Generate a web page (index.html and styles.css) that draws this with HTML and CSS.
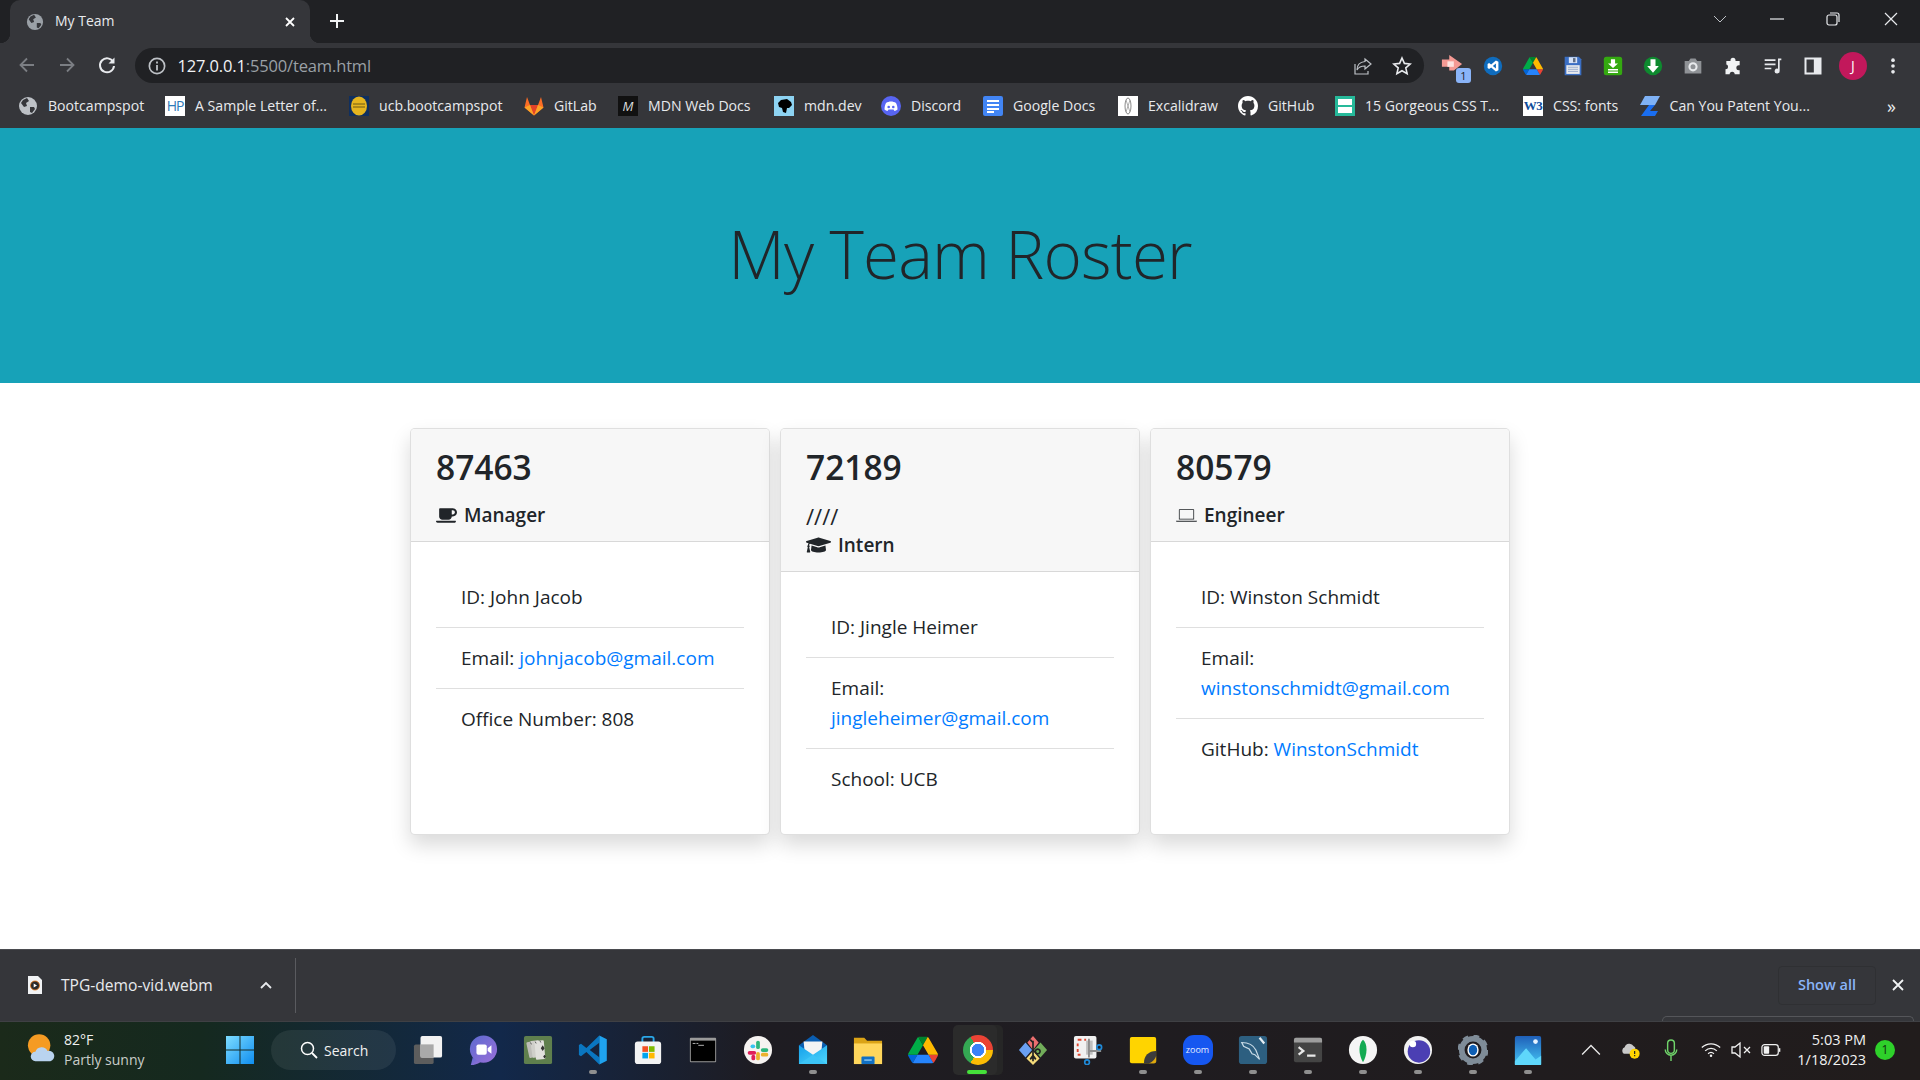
FILE: index.html
```html
<!DOCTYPE html>
<html lang="en">
<head>
<meta charset="utf-8">
<title>My Team</title>
<link rel="stylesheet" href="styles.css">
</head>
<body>
<svg class="defs" width="0" height="0" aria-hidden="true">
  <defs>
    <symbol id="drive" viewBox="0 0 87.3 78">
      <path d="m6.6 66.85 3.85 6.65c.8 1.4 1.95 2.5 3.3 3.3l13.75-23.8h-27.5c0 1.55.4 3.1 1.2 4.5z" fill="#0066da"/>
      <path d="m43.65 25-13.75-23.8c-1.35.8-2.5 1.9-3.3 3.3l-25.4 44a9.06 9.06 0 0 0 -1.2 4.5h27.5z" fill="#00ac47"/>
      <path d="m73.55 76.8c1.35-.8 2.5-1.9 3.3-3.3l1.6-2.75 7.65-13.25c.8-1.4 1.2-2.95 1.2-4.5h-27.502l5.852 11.5z" fill="#ea4335"/>
      <path d="m43.65 25 13.75-23.8c-1.35-.8-2.9-1.2-4.5-1.2h-18.5c-1.6 0-3.15.45-4.5 1.2z" fill="#00832d"/>
      <path d="m59.8 53h-32.3l-13.75 23.8c1.35.8 2.9 1.2 4.5 1.2h50.8c1.6 0 3.15-.45 4.5-1.2z" fill="#2684fc"/>
      <path d="m73.4 26.5-12.7-22c-.8-1.4-1.95-2.5-3.3-3.3l-13.75 23.8 16.15 28h27.45c0-1.55-.4-3.1-1.2-4.5z" fill="#ffba00"/>
    </symbol>
    <linearGradient id="wl" x1="0" y1="0" x2="1" y2="1"><stop offset="0" stop-color="#7ddcff"/><stop offset="1" stop-color="#0f8ef0"/></linearGradient>
    <linearGradient id="ph" x1="0" y1="0" x2="0" y2="1"><stop offset="0" stop-color="#1f5fb8"/><stop offset="1" stop-color="#45c5f5"/></linearGradient>
    <linearGradient id="tm" x1="0" y1="0" x2="1" y2="1"><stop offset="0" stop-color="#5b6ad0"/><stop offset="1" stop-color="#9a6fd8"/></linearGradient>
    <linearGradient id="ml" x1="0" y1="0" x2="1" y2="1"><stop offset="0" stop-color="#15a0ea"/><stop offset="1" stop-color="#4fd6fb"/></linearGradient>
  </defs>
</svg>
<div class="tabstrip">
  <div class="tab">
    <svg class="favicon" viewBox="0 0 20 20"><circle cx="10" cy="10" r="9" fill="#9aa0a6"/><path d="M5 4l4-2 2 3-3 2 1 3-3 1-3-4zM12 11l4 0 1 2-3 4-2-1z" fill="#35363a"/></svg>
    <span class="tab-title">My Team</span>
    <svg class="tab-x" viewBox="0 0 12 12"><path d="M2 2l8 8M10 2l-8 8" stroke="#fff" stroke-width="1.8"/></svg>
  </div>
  <svg class="newtab" viewBox="0 0 16 16"><path d="M8 1v14M1 8h14" stroke="#f1f3f4" stroke-width="2"/></svg>
  <div class="winctl">
    <svg viewBox="0 0 14 8" class="w-chev"><path d="M1 1l6 6 6-6" fill="none" stroke="#bdc1c6"/></svg>
    <svg viewBox="0 0 14 14" class="w-btn w-min"><path d="M0 7h14" stroke="#e8eaed" stroke-width="1.2"/></svg>
    <svg viewBox="0 0 14 14" class="w-btn w-res"><rect x="1" y="3" width="10" height="10" rx="2" fill="none" stroke="#e8eaed" stroke-width="1.2"/><path d="M4 1h7a2 2 0 0 1 2 2v7" fill="none" stroke="#e8eaed" stroke-width="1.2"/></svg>
    <svg viewBox="0 0 14 14" class="w-btn w-cls"><path d="M1 1l12 12M13 1L1 13" stroke="#e8eaed" stroke-width="1.2"/></svg>
  </div>
</div>

<div class="toolbar">
  <div class="navs">
    <svg class="tb" viewBox="0 0 20 20"><path d="M17 10H4M10 3.5L3.5 10l6.5 6.5" fill="none" stroke="#7b7e83" stroke-width="1.8"/></svg>
    <svg class="tb" viewBox="0 0 20 20"><path d="M3 10h13M10 3.5l6.5 6.5-6.5 6.500" fill="none" stroke="#7b7e83" stroke-width="1.8"/></svg>
    <svg class="tb" viewBox="0 0 20 20"><path d="M16.2 7A7 7 0 1 0 17 11" fill="none" stroke="#e8eaed" stroke-width="2"/><path d="M17.5 2.5v6h-6z" fill="#e8eaed"/></svg>
  </div>
  <div class="omnibox">
    <svg class="info" viewBox="0 0 16 16"><circle cx="8" cy="8" r="6.8" fill="none" stroke="#bdc1c6" stroke-width="1.5"/><path d="M8 7v5M8 4v1.8" stroke="#bdc1c6" stroke-width="1.6"/></svg>
    <span class="url"><b>127.0.0.1</b>:5500/team.html</span>
    <svg class="omni-ico share" viewBox="0 0 20 20"><path d="M12 3l6 5-6 5v-3c-4 0-6.500 1-8 4 0-5 3-8 8-8.500z" fill="none" stroke="#bdc1c6" stroke-width="1.2"/><path d="M2 8v10h13v-3" fill="none" stroke="#bdc1c6" stroke-width="1.2"/></svg>
    <svg class="omni-ico" viewBox="0 0 20 20"><path d="M10 2l2.400 5.400 5.800.6-4.400 3.900 1.300 5.800L10 14.700l-5.100 3 1.300-5.800L1.800 8l5.800-.6z" fill="none" stroke="#e8eaed" stroke-width="1.6"/></svg>
  </div>
  <div class="exts">
    <div class="ext"><svg class="ext-arrow" viewBox="0 0 24 24"><path d="M1 6h8V1l14 10-9 7-5 0v-4H1z" fill="#f59a94"/><rect x="7" y="8" width="7" height="6" fill="#fde3e0"/></svg><span class="ext-badge">1</span></div>
    <div class="ext"><svg viewBox="0 0 24 24"><circle cx="12" cy="12" r="11" fill="#0f6cbd"/><path d="M15.500 5.500L9.800 10.300 7.300 8.500 5.500 9.500v5l1.800 1 2.500-1.800 5.700 4.800 3-1.300V6.800zM15.500 9v6l-3.700-3z" fill="#fff" fill-rule="evenodd"/></svg></div>
    <div class="ext"><svg viewBox="0 0 87.3 78"><use href="#drive"/></svg></div>
    <div class="ext"><svg viewBox="0 0 24 24"><path d="M2 1h17l3 3v19H2z" fill="#3b6fc4"/><rect x="7" y="1.500" width="10" height="7" fill="#d7e3f7"/><rect x="12" y="2.500" width="3" height="5" fill="#5f6d85"/><rect x="4" y="11" width="16" height="10.500" fill="#e8eaed"/><path d="M6 13.500h12M6 16h12M6 18.500h12" stroke="#8ea4c9"/></svg></div>
    <div class="ext"><svg viewBox="0 0 24 24"><rect x="1" y="1" width="22" height="22" rx="3" fill="#34a910"/><path d="M9.500 4h5v5h3.500L12 14.500 6 9h3.500z" fill="#fff"/><path d="M6 16.500h12M6 19.500h12" fill="none" stroke="#fff" stroke-width="1.800"/></svg></div>
    <div class="ext"><svg viewBox="0 0 24 24"><circle cx="12" cy="12" r="11" fill="#0e8a2f"/><path d="M9 4h6v8h4l-7 8-7-8h4z" fill="#fff"/></svg></div>
    <div class="ext"><svg viewBox="0 0 24 24"><path d="M2 6h5l2-3h6l2 3h5v15H2z" fill="#8f9296"/><circle cx="12" cy="13" r="5.500" fill="#e8eaed"/><circle cx="12" cy="13" r="3" fill="#8f9296"/></svg></div>
    <div class="ext"><svg viewBox="0 0 24 24"><path d="M4 6h5V5a3 3 0 0 1 6 0v1h5v5h-1a3 3 0 0 0 0 6h1v5h-6a3 3 0 0 0-6 0H3v-6a3 3 0 0 0 0-6h1z" fill="#f1f3f4"/></svg></div>
    <div class="ext"><svg viewBox="0 0 24 24"><path d="M2 5h13M2 10h13M2 15h8" stroke="#e8eaed" stroke-width="2"/><path d="M18 3h4v2h-2v13a3 3 0 1 1-2-2.800z" fill="#e8eaed"/></svg></div>
    <div class="ext"><svg viewBox="0 0 24 24"><rect x="3" y="3" width="18" height="18" fill="none" stroke="#e8eaed" stroke-width="2.400"/><rect x="13" y="3" width="8" height="18" fill="#e8eaed"/></svg></div>
    <div class="ext"><span class="avatar">J</span></div>
    <div class="ext"><svg viewBox="0 0 24 24"><circle cx="12" cy="5" r="2.200" fill="#e8eaed"/><circle cx="12" cy="12" r="2.200" fill="#e8eaed"/><circle cx="12" cy="19" r="2.200" fill="#e8eaed"/></svg></div>
  </div>
</div>

<div class="bookmarks">
  <a class="bm"><svg class="bi" viewBox="0 0 20 20"><circle cx="10" cy="10" r="9" fill="#bdc1c6"/><path d="M5 4l4-2 2 3-3 2 1 3-3 1-3-4zM12 11l4 0 1 2-3 4-2-1z" fill="#35363a"/></svg>Bootcampspot</a>
  <a class="bm"><span class="bi bi-hp">HP</span>A Sample Letter of...</a>
  <a class="bm"><svg class="bi" viewBox="0 0 20 20"><rect width="20" height="20" fill="#0f2f5f"/><ellipse cx="10" cy="10" rx="8" ry="9.500" fill="#e5b51f"/><path d="M4 8h12M4 11h12" stroke="#6d5a14"/></svg>ucb.bootcampspot</a>
  <a class="bm"><svg class="bi" viewBox="0 0 20 20"><path d="M10 19.500L.500 11.500 3 1l3 8h8l3-8 2.500 10.500z" fill="#fc6d26"/><path d="M10 19.500L6 9h8z" fill="#e24329"/><path d="M.500 11.500L6 9l4 10.500zM19.500 11.500L14 9l-4 10.500z" fill="#fca326"/></svg>GitLab</a>
  <a class="bm"><span class="bi bi-mdn">M</span>MDN Web Docs</a>
  <a class="bm"><svg class="bi" viewBox="0 0 20 20"><rect width="20" height="20" fill="#8dd3f2"/><path d="M4 7l3-3 6-1 4 3 1 3-3 3-2 0-1 5-3-1-1-4-3-1z" fill="#000"/></svg>mdn.dev</a>
  <a class="bm"><svg class="bi" viewBox="0 0 20 20"><circle cx="10" cy="10" r="10" fill="#5865f2"/><path d="M5 7c3-2 7-2 10 0 1 2 1.500 4 1.500 6.500-1 .8-2 1.200-3 1.500l-1-1.500h-5L6.500 15c-1-.3-2-.7-3-1.500C3.500 11 4 9 5 7z" fill="#fff"/><circle cx="7.700" cy="11" r="1.300" fill="#5865f2"/><circle cx="12.300" cy="11" r="1.300" fill="#5865f2"/></svg>Discord</a>
  <a class="bm"><svg class="bi" viewBox="0 0 20 20"><rect width="20" height="20" rx="2" fill="#4285f4"/><path d="M4 5h12M4 9h12M4 13h12M4 16h7" stroke="#fff" stroke-width="1.800"/></svg>Google Docs</a>
  <a class="bm"><svg class="bi" viewBox="0 0 20 20"><rect width="20" height="20" fill="#fff"/><ellipse cx="10" cy="10" rx="3" ry="8" fill="none" stroke="#8a8a8a"/><path d="M8 4l4 12M12 4L8 16" stroke="#9a9a9a" stroke-width=".8"/></svg>Excalidraw</a>
  <a class="bm"><svg class="bi" viewBox="0 0 16 16"><path fill="#fff" d="M8 0C3.580 0 0 3.580 0 8c0 3.540 2.290 6.530 5.470 7.590.4.070.55-.170.55-.380 0-.190-.010-.820-.010-1.490-2.010.370-2.530-.490-2.690-.940-.090-.230-.480-.940-.820-1.130-.280-.150-.680-.520-.010-.530.630-.010 1.080.580 1.230.820.720 1.210 1.870.870 2.330.660.070-.520.280-.870.510-1.070-1.780-.200-3.640-.890-3.640-3.950 0-.870.310-1.590.820-2.150-.080-.200-.360-1.020.080-2.120 0 0 .670-.210 2.200.820.640-.180 1.320-.270 2-.270s1.360.090 2 .270c1.530-1.040 2.200-.820 2.200-.820.440 1.100.160 1.920.080 2.120.510.560.820 1.270.820 2.150 0 3.070-1.870 3.750-3.650 3.950.290.250.540.730.540 1.480 0 1.070-.010 1.930-.010 2.200 0 .210.150.460.550.380A8.010 8.010 0 0 0 16 8c0-4.420-3.580-8-8-8z"/></svg>GitHub</a>
  <a class="bm"><svg class="bi" viewBox="0 0 20 20"><rect width="20" height="20" fill="#26b99a"/><rect x="3" y="3" width="14" height="6" fill="#fff"/><rect x="3" y="11" width="14" height="6" fill="#fff"/></svg>15 Gorgeous CSS T...</a>
  <a class="bm"><span class="bi bi-w3">W3</span>CSS: fonts</a>
  <a class="bm"><svg class="bi" viewBox="0 0 20 20"><path d="M5 0h15l-5 9H0z" fill="#7fb2f5"/><path d="M9 9h6l-5 6h8l-3 5H1z" fill="#1a6ef0"/></svg>Can You Patent You...</a>
  <span class="bm-more">»</span>
</div>

<main class="page">
  <header class="hero"><h1 class="hero-title">My Team Roster</h1></header>
  <section class="roster">
    <article class="card">
      <div class="card-head">
        <h3 class="emp-name">87463</h3>
        <h5 class="emp-role"><svg class="role-ico" viewBox="0 0 640 512"><path d="M192 384h192c53 0 96-43 96-96h32c70.600 0 128-57.400 128-128S582.600 32 512 32H120c-13.300 0-24 10.700-24 24v232c0 53 43 96 96 96zM512 96c35.300 0 64 28.700 64 64s-28.700 64-64 64h-32V96h32zm47.700 384H48.300c-47.600 0-61-64-36-64h583.300c25 0 11.800 64-35.900 64z"/></svg>Manager</h5>
      </div>
      <ul class="facts">
        <li>ID: John Jacob</li>
        <li>Email: <a href="#">johnjacob@gmail.com</a></li>
        <li>Office Number: 808</li>
      </ul>
    </article>
    <article class="card">
      <div class="card-head">
        <h3 class="emp-name">72189</h3>
        <div class="slashes">////</div>
        <h5 class="emp-role"><svg class="role-ico role-ico-cap" viewBox="0 0 640 512"><path d="M622.340 153.200L343.400 67.500c-15.200-4.670-31.600-4.670-46.790 0L17.660 153.200c-23.540 7.230-23.540 38.360 0 45.590l48.630 14.940c-10.670 13.190-17.230 29.280-17.880 46.900C38.780 266.150 32 276.110 32 288c0 10.780 5.680 19.850 13.860 25.650L20.330 428.530C18.110 438.520 25.710 448 35.940 448h56.110c10.240 0 17.840-9.480 15.620-19.470L82.140 313.650C90.320 307.850 96 298.780 96 288c0-11.570-6.470-21.250-15.660-26.870.76-15.020 8.440-28.300 20.690-36.720L296.600 284.500c9.060 2.780 26.440 6.250 46.790 0l278.950-85.700c23.550-7.240 23.550-38.360 0-45.600zM352.790 315.090c-28.530 8.760-52.840 3.920-65.590 0l-145.020-44.550L128 384c0 35.350 85.960 64 192 64s192-28.650 192-64l-14.180-113.470-145.030 44.560z"/></svg>Intern</h5>
      </div>
      <ul class="facts">
        <li>ID: Jingle Heimer</li>
        <li>Email: <a href="#">jingleheimer@gmail.com</a></li>
        <li>School: UCB</li>
      </ul>
    </article>
    <article class="card">
      <div class="card-head">
        <h3 class="emp-name">80579</h3>
        <h5 class="emp-role"><svg class="role-ico" viewBox="0 0 640 512"><path d="M104 64h432a16 16 0 0 1 16 16v296H88V80a16 16 0 0 1 16-16zm8 24v264h416V88zM0 416h640v8a24 24 0 0 1-24 24H24a24 24 0 0 1-24-24z" fill-rule="evenodd"/></svg>Engineer</h5>
      </div>
      <ul class="facts">
        <li>ID: Winston Schmidt</li>
        <li>Email: <a href="#">winstonschmidt@gmail.com</a></li>
        <li>GitHub: <a href="#">WinstonSchmidt</a></li>
      </ul>
    </article>
  </section>
</main>

<div class="downloads">
  <div class="dl-item">
    <svg class="dl-file" viewBox="0 0 14 18"><path d="M0 0h10l4 4v14H0z" fill="#f1f3f4"/><circle cx="7" cy="9.500" r="4.500" fill="#2b2b2b"/><circle cx="7" cy="9.500" r="4.500" fill="none" stroke="#e8710a" stroke-width=".8"/><path d="M5.700 7.500l3.300 2-3.300 2z" fill="#fff"/></svg>
    <span class="dl-name">TPG-demo-vid.webm</span>
    <svg class="dl-chev" viewBox="0 0 12 8"><path d="M1 7l5-5 5 5" fill="none" stroke="#e8eaed" stroke-width="1.800"/></svg>
  </div>
  <button class="show-all">Show all</button>
  <svg class="dl-close" viewBox="0 0 12 12"><path d="M1 1l10 10M11 1L1 11" stroke="#f1f3f4" stroke-width="1.800"/></svg>
  <div class="dl-popup"></div>
</div>

<footer class="taskbar">
  <div class="weather">
    <svg class="weather-ico" viewBox="0 0 30 34"><circle cx="13" cy="12" r="12" fill="#f59b23"/><path d="M9 29a5 5 0 0 1 0-10 7 7 0 0 1 13-1 5.500 5.500 0 0 1 3 11z" fill="#b9d3ef"/></svg>
    <div class="weather-text"><div>82°F</div><div class="dim">Partly sunny</div></div>
  </div>
  <svg class="winlogo" viewBox="0 0 30 30"><path d="M1 1h13.500v13.500H1zM15.500 1H29v13.500H15.500zM1 15.500h13.500V29H1zM15.500 15.500H29V29H15.500z" fill="url(#wl)"/></svg>
  <div class="searchpill"><svg viewBox="0 0 18 18"><circle cx="7.500" cy="7.500" r="6" fill="none" stroke="#fff" stroke-width="1.500"/><path d="M12 12l5 5" stroke="#fff" stroke-width="1.800"/></svg><span>Search</span></div>
  <div class="apps">
    <div class="app"><svg viewBox="0 0 32 32"><rect x="1" y="10" width="21" height="21" rx="2" fill="#5d5d5d"/><rect x="8" y="1" width="23" height="23" rx="2" fill="#f2f2f2"/><rect x="8" y="10" width="14" height="14" fill="#a9a9a9"/></svg></div>
    <div class="app"><svg viewBox="0 0 32 32"><circle cx="16.500" cy="15" r="14.500" fill="url(#tm)"/><path d="M5 24l-2 8c4 0 7-1 10-3z" fill="url(#tm)"/><rect x="9" y="10" width="11" height="11" rx="2" fill="#fff"/><path d="M21 14l4-3v9l-4-3z" fill="#fff"/></svg></div>
    <div class="app"><svg viewBox="0 0 32 32"><rect x="1" y="1" width="30" height="30" rx="2" fill="#5f7f4d"/><rect x="5" y="7" width="9" height="17" rx="1" fill="#bdbdb8" transform="rotate(-12 9 15)"/><rect x="9" y="6" width="9" height="18" rx="1" fill="#cfcfca" transform="rotate(-8 13 15)"/><rect x="13" y="6" width="10" height="20" rx="1" fill="#e0e0dc" transform="rotate(-5 18 16)"/><path d="M21 11l2 3-2 3-2-3zM23 21l1.500 2-1.500 2-1.500-2z" fill="#333"/><path d="M8 8l1 2M13 7l1 2M18 6l1 2" stroke="#555"/></svg></div>
    <div class="app running"><svg viewBox="0 0 100 100"><path d="M71 2L28 43 10 29 3 33v34l7 4 18-14 43 41V74L39 50 71 26z" fill="#0a76c0"/><path d="M71 2l25 12v72L71 98z" fill="#1fa2ee"/></svg></div>
    <div class="app"><svg viewBox="0 0 32 32"><path d="M10 9V4a2 2 0 0 1 2-2h8a2 2 0 0 1 2 2v5" fill="none" stroke="#2aa7e8" stroke-width="2"/><rect x="2" y="7" width="28" height="24" rx="3" fill="#f3f3f3"/><rect x="10" y="12" width="6" height="6" fill="#f25022"/><rect x="17" y="12" width="6" height="6" fill="#7fba00"/><rect x="10" y="19" width="6" height="6" fill="#00a4ef"/><rect x="17" y="19" width="6" height="6" fill="#ffb900"/></svg></div>
    <div class="app"><svg viewBox="0 0 32 32"><rect x="2" y="3" width="28" height="26" rx="1" fill="#9a9a9a"/><rect x="3" y="6" width="26" height="22" fill="#000"/><path d="M5 9h3M9 9h2M11 11h6" stroke="#bbb"/></svg></div>
    <div class="app"><svg viewBox="0 0 32 32"><circle cx="16" cy="16" r="15" fill="#f6f3f1"/><rect x="14" y="6" width="4" height="9" rx="2" fill="#2eb67d"/><rect x="8" y="10" width="5" height="4" rx="2" fill="#36c5f0"/><rect x="19" y="14" width="8" height="4" rx="2" fill="#2eb67d"/><rect x="19" y="19" width="8" height="4" rx="2" fill="#ecb22e"/><rect x="5" y="17" width="9" height="4" rx="2" fill="#e01e5a"/><rect x="14" y="18" width="4" height="9" rx="2" fill="#ecb22e"/><rect x="9" y="21" width="4" height="6" rx="2" fill="#e01e5a"/></svg></div>
    <div class="app running"><svg viewBox="0 0 32 32"><path d="M16 0l15 11v5H1v-5z" fill="#0a5db0"/><path d="M6 7h20l-1 10-9 5-9-5z" fill="#f4f4f4"/><path d="M1 11l15 10 15-10v20H1z" fill="url(#ml)"/><path d="M1 31l15-10 15 10z" fill="#3cc4f7"/></svg></div>
    <div class="app"><svg viewBox="0 0 32 32"><path d="M1 3h11l3 3h16v25H1z" fill="#dba316"/><path d="M1 9h30v22H1z" fill="#ffd65c"/><rect x="9" y="23" width="14" height="8" rx="1" fill="#1170c4"/><rect x="12" y="26" width="8" height="1.500" fill="#8cc8f5"/></svg></div>
    <div class="app"><svg viewBox="0 0 87.3 78"><use href="#drive"/></svg></div>
    <div class="app app-chrome"><span class="chrome-ico"></span></div>
    <div class="app"><svg viewBox="0 0 32 32"><path d="M16 1l6 7-6 8-6-8z" fill="#ec6f6f"/><path d="M24 8l7 8-7 8-7-8z" fill="#72ad5a"/><path d="M8 8l7 8-7 8-7-8z" fill="#6aa0f2"/><path d="M16 17l7 8-7 7-7-7z" fill="#f5da7a"/><path d="M16 6v22M13 5l3 3M16 22l-3 4M16 22l3 4M21 15a2.500 2.500 0 1 0 .1 0z" fill="none" stroke="#222" stroke-width="1.800"/></svg></div>
    <div class="app"><svg viewBox="0 0 32 32"><rect x="1" y="1" width="24" height="24" rx="2" fill="#f1f1f1"/><path d="M5 5h4M5 9v3M5 15v3M5 21h3M12 5h2" stroke="#e0452f" stroke-width="2"/><rect x="14" y="6" width="7" height="15" fill="#bfbfbf"/><path d="M17 4v20M17 17l13 0" stroke="#8d8d8d" stroke-width="2"/><circle cx="28" cy="13" r="2.500" fill="none" stroke="#1f8ad8" stroke-width="1.800"/><circle cx="15" cy="29" r="2.500" fill="none" stroke="#1f8ad8" stroke-width="1.800"/></svg></div>
    <div class="app running"><svg viewBox="0 0 32 32"><rect x="2" y="2" width="28" height="28" rx="2" fill="#ffd400"/><path d="M17 30c0-8 5-13 13-13v11a2 2 0 0 1-2 2z" fill="#3c3c3c"/><path d="M22 30c3-.5 7-4 8-8v6a2 2 0 0 1-2 2z" fill="#e0a80c"/></svg></div>
    <div class="app running"><span class="zoom-ico">zoom</span></div>
    <div class="app running"><svg viewBox="0 0 32 32"><rect x="1" y="1" width="30" height="30" rx="3" fill="#2d5f80"/><path d="M4 8c6 0 12 2 15 8l4 10-5-5-3-1-3-5-6-3z" fill="none" stroke="#c9dbe6" stroke-width="1.300"/><path d="M23 3l5 6" stroke="#e6eef3" stroke-width="2.400"/></svg></div>
    <div class="app running"><svg viewBox="0 0 32 32"><rect x="1" y="3" width="30" height="26" rx="2" fill="#444"/><path d="M1 5a2 2 0 0 1 2-2h26a2 2 0 0 1 2 2v3H1z" fill="#9d9d9d"/><path d="M6 13l5 4-5 4" fill="none" stroke="#e8e8e8" stroke-width="2.400"/><path d="M15 22h9" stroke="#e8e8e8" stroke-width="2.400"/></svg></div>
    <div class="app running"><svg viewBox="0 0 32 32"><circle cx="16" cy="16" r="15" fill="#f5f5f5"/><path d="M16 5c5 4 5 16 0 24-5-8-5-20 0-24z" fill="#13aa52"/></svg></div>
    <div class="app running"><svg viewBox="0 0 32 32"><circle cx="16" cy="16" r="15" fill="#f1f1f1"/><circle cx="17" cy="17.500" r="12" fill="#4b3fb3"/><circle cx="10.500" cy="9.500" r="3.500" fill="#fff"/></svg></div>
    <div class="app running"><svg viewBox="0 0 32 32"><circle cx="16" cy="16" r="12" fill="none" stroke="#7f8c98" stroke-width="6"/><circle cx="16" cy="16" r="15" fill="none" stroke="#7f8c98" stroke-width="3" stroke-dasharray="6 5.800"/><ellipse cx="16" cy="16" rx="6" ry="7" fill="#fff"/><ellipse cx="16" cy="16" rx="4.500" ry="5.500" fill="#0f5fb4"/></svg></div>
    <div class="app running"><svg viewBox="0 0 32 32"><rect x="2" y="1" width="28" height="31" rx="2" fill="url(#ph)"/><circle cx="24" cy="7" r="2.500" fill="#e6f2ff"/><path d="M2 28l12-14 10 12 6-4v10H2z" fill="#5fd7fb"/></svg></div>
  </div>
  <div class="tray">
    <svg class="tray-ico" viewBox="0 0 18 10"><path d="M1 9l8-8 8 8" fill="none" stroke="#e8e8e8" stroke-width="1.200"/></svg>
    <svg class="tray-ico" viewBox="0 0 22 20"><path d="M3 14a4 4 0 0 1 1-7 5.500 5.500 0 0 1 10-1 4 4 0 0 1 2 2l-6 6z" fill="#c9c9c9"/><circle cx="15" cy="14" r="5.500" fill="#ffd400"/><path d="M15 11v3.500M15 15.500v1.500" stroke="#222" stroke-width="1.300"/></svg>
    <svg class="tray-ico tray-mic" viewBox="0 0 14 24"><rect x="3.500" y="1" width="7" height="14" rx="3.500" fill="none" stroke="#6fd36a" stroke-width="1.500"/><path d="M1 11a6 6 0 0 0 12 0M7 17v6" fill="none" stroke="#6fd36a" stroke-width="1.500"/></svg>
    <svg class="tray-ico" viewBox="0 0 24 18"><path d="M1 6c6-6 16-6 22 0M5 10c4-4 10-4 14 0M8.500 13.500c2-2 5-2 7 0" fill="none" stroke="#f1f1f1" stroke-width="1.500"/><circle cx="12" cy="16" r="1.500" fill="#f1f1f1"/></svg>
    <svg class="tray-ico" viewBox="0 0 20 16"><path d="M1 5h3l5-4v14l-5-4H1z" fill="none" stroke="#f1f1f1" stroke-width="1.300"/><path d="M13 5l6 6M19 5l-6 6" stroke="#f1f1f1" stroke-width="1.300"/></svg>
    <svg class="tray-ico" viewBox="0 0 22 14"><rect x="1" y="1" width="18" height="12" rx="3" fill="none" stroke="#f1f1f1" stroke-width="1.300"/><rect x="3" y="3" width="6" height="8" rx="1" fill="#f1f1f1"/><path d="M20.500 5v4" stroke="#f1f1f1" stroke-width="1.500"/></svg>
  </div>
  <div class="clock"><div>5:03 PM</div><div>1/18/2023</div></div>
  <span class="notif">1</span>
</footer>
</body>
</html>
```
FILE: styles.css
```css
* { box-sizing: border-box; }
html, body { margin: 0; height: 1080px; overflow: hidden; }
body {
  width: 1920px;
  display: flex;
  flex-direction: column;
  font-family: "Open Sans", "Noto Sans", sans-serif;
  background: #fff;
  color: #212529;
}
svg { display: block; flex: none; }
.defs { position: absolute; }

/* tab strip */
.tabstrip { height: 43px; flex: none; background: #202124; display: flex; align-items: stretch; padding-left: 10px; }
.tab { width: 300px; background: #35363a; border-radius: 10px 10px 0 0; display: flex; align-items: center; padding: 0 14px 0 16px; position: relative; }
.tab::before, .tab::after { content: ""; position: absolute; bottom: 0; width: 10px; height: 10px; }
.tab::before { left: -10px; background: radial-gradient(circle at 0 0, transparent 10px, #35363a 10.5px); }
.tab::after { right: -10px; background: radial-gradient(circle at 100% 0, transparent 10px, #35363a 10.5px); }
.favicon { width: 18px; height: 18px; }
.tab-title { margin: 0 0 3px 11px; color: #e8eaed; font-size: 14px; flex: 1; }
.tab-x { width: 12px; height: 12px; }
.newtab { width: 16px; height: 16px; margin: 13px 0 0 19px; }
.winctl { margin-left: auto; width: 240px; position: relative; }
.w-chev { width: 14px; height: 8px; position: absolute; left: 33px; top: 15px; }
.w-btn { width: 14px; height: 14px; position: absolute; top: 12px; }
.w-min { left: 90px; }
.w-res { left: 146px; }
.w-cls { left: 204px; }

/* toolbar */
.toolbar { height: 40px; flex: none; background: #35363a; display: flex; padding-top: 5px; }
.navs { display: flex; padding-left: 7px; width: 135px; }
.tb { width: 40px; height: 20px; margin-top: 7px; }
.omnibox { width: 1289px; height: 35px; background: #202124; border-radius: 18px; display: flex; align-items: center; padding: 0 2px 0 13px; }
.info { width: 18px; height: 18px; }
.url { margin-left: 11.5px; font-size: 16.5px; color: #9aa0a6; letter-spacing: -.15px; }
.url b { font-weight: 400; color: #f1f3f4; }
.omni-ico { width: 20px; height: 20px; margin: 0 10px; }
.share { margin-left: auto; margin-right: 9px; }
.exts { display: flex; margin-left: 9px; height: 35px; }
.ext { width: 40px; display: flex; align-items: center; justify-content: center; position: relative; }
.ext svg { width: 20px; height: 20px; }
.ext .ext-arrow { width: 22px; height: 22px; margin: -2px 0 0 -2px; }
.ext-badge { position: absolute; left: 23px; top: 20px; width: 15px; height: 15px; border-radius: 3px; background: #8ab4f8; color: #202124; font-size: 11px; line-height: 15px; text-align: center; }
.avatar { width: 28px; height: 28px; border-radius: 50%; background: #c2185b; color: #fff; font-size: 14px; line-height: 28px; text-align: center; }

/* bookmarks */
.bookmarks { height: 45px; flex: none; background: #35363a; display: grid; grid-template-columns: 147px 184px 175px 94px 156px 107px 102px 135px 120px 97px 188px 116.5px 1fr auto; align-items: center; padding: 0 24px 0 18px; }
.bm { display: flex; align-items: center; gap: 10px; color: #e8eaed; font-size: 14.1px; white-space: nowrap; }
.bi { width: 20px; height: 20px; flex: none; }
.bi-hp { background: #fff; color: #2f7ab8; font-size: 14px; line-height: 20px; text-align: center; letter-spacing: -1px; }
.bi-mdn { background: #111; color: #ddd; font-size: 13px; line-height: 20px; text-align: center; font-style: italic; }
.bi-w3 { background: #fff; color: #0f4c9a; font-family: "Liberation Serif", serif; font-size: 13px; line-height: 20px; text-align: center; font-weight: 700; letter-spacing: -.5px; }
.bm-more { color: #e8eaed; font-size: 18px; line-height: 20px; }

/* page */
.page { flex: 1; min-height: 0; background: #fff; }
.hero { height: 255px; background: #17a2b8; display: flex; align-items: center; justify-content: center; padding-bottom: 2px; }
.hero-title { margin: 0; font-size: 65.5px; font-weight: 300; line-height: 1.2; letter-spacing: -.8px; color: #212529; }
.roster { display: grid; grid-template-columns: repeat(3, 360px); gap: 10px; justify-content: center; margin-top: 45px; }
.card { background: #fff; border: 1px solid rgba(0,0,0,.125); border-radius: 5px; box-shadow: 0 10px 20px rgba(0,0,0,.15); display: flex; flex-direction: column; overflow: hidden; }
.card-head { background: #f7f7f7; border-bottom: 1px solid rgba(0,0,0,.125); padding: 17px 25px 11px; }
.emp-name { margin: 0 0 12px; font-size: 33.5px; font-weight: 600; line-height: 42px; color: #212529; }
.emp-role { margin: 0; font-size: 19px; font-weight: 600; line-height: 30px; display: flex; align-items: center; gap: 7px; }
.slashes { font-size: 22px; line-height: 27px; padding-top: 3px; font-weight: 400; }
.role-ico { width: 21px; height: 17px; fill: #212529; }
.role-ico-cap { width: 25px; height: 20px; }
.facts { list-style: none; margin: 25px; padding: 0; font-size: 19px; line-height: 30px; }
.facts li { padding: 15px 25px; border-bottom: 1px solid rgba(0,0,0,.125); }
.facts li:last-child { border-bottom: 0; }
.facts a { color: #007bff; text-decoration: none; }

/* download bar */
.downloads { height: 72px; flex: none; background: #35363a; border-top: 1px solid #4a4b4f; position: relative; display: flex; align-items: center; color: #e8eaed; padding-bottom: 1px; }
.dl-item { width: 296px; height: 55px; border-right: 1px solid #5a5b5f; display: flex; align-items: center; padding-left: 28px; }
.dl-file { width: 14px; height: 18px; }
.dl-name { margin: 0 0 1px 19px; font-size: 15.6px; flex: 1; white-space: nowrap; }
.dl-chev { width: 12px; height: 8px; margin-right: 23px; }
.show-all { margin-left: auto; width: 98px; height: 39px; background: transparent; border: 1px solid #2f3033; border-radius: 4px; color: #8ab4f8; font: 600 14.5px "Open Sans", sans-serif; padding: 0 0 2px; }
.dl-close { width: 12px; height: 12px; margin: 0 16px 0 16px; }
.dl-popup { position: absolute; left: 1662px; bottom: 0; width: 252px; height: 5px; border: 1px solid #55565a; border-bottom: 0; border-radius: 6px 6px 0 0; }

/* taskbar */
.taskbar { height: 59px; flex: none; display: flex; align-items: center; padding-bottom: 2px; background: linear-gradient(90deg, #1b2a1a 0, #15291f 200px, #12284a 500px, #1e1c22 760px, #211c1c 100%); color: #f1f1f1; border-top: 1px solid #3f4044; }
.weather { width: 225px; display: flex; align-items: center; padding-left: 27px; }
.weather-ico { width: 28px; height: 32px; }
.weather-text { margin-left: 9px; font-size: 14px; line-height: 20px; }
.dim { color: #c9cdc9; }
.winlogo { width: 30px; height: 30px; }
.searchpill { margin-left: 16px; width: 125px; height: 40px; border-radius: 20px; background: rgba(255,255,255,.07); display: flex; align-items: center; padding-left: 29px; gap: 6px; font-size: 14px; }
.searchpill svg { width: 18px; height: 18px; }
.apps { display: flex; margin-left: 4px; }
.app { width: 55px; height: 56px; display: flex; align-items: center; justify-content: center; position: relative; }
.app svg { width: 30px; height: 30px; position: relative; }
.running::after { content: ""; position: absolute; left: 24px; bottom: 4px; width: 8px; height: 4px; border-radius: 2px; background: #8f8f8f; }
.app-chrome::before { content: ""; position: absolute; left: 3px; top: 3px; width: 44px; height: 50px; border-radius: 5px; background: #2b2b2b; box-shadow: 6px 0 0 #262626; }
.app-chrome::after { content: ""; position: absolute; left: 17px; bottom: 4px; width: 20px; height: 4px; border-radius: 2px; background: #45e03a; }
.chrome-ico { width: 30px; height: 30px; border-radius: 50%; position: relative; background: radial-gradient(circle, #3a82f7 0 6px, #fff 6.5px 8px, transparent 8.5px), conic-gradient(#ea4335 0 90deg, #fbbc04 90deg 210deg, #34a853 210deg 330deg, #ea4335 330deg); }
.zoom-ico { width: 30px; height: 30px; border-radius: 11px; background: #1657f0; color: #e6eeff; font-size: 9px; line-height: 30px; text-align: center; }
.tray { display: grid; grid-template-columns: 40px 40px 40px 40px 20px 40px; margin-left: 16px; align-items: center; justify-items: center; }
.tray-ico { width: 20px; height: 20px; }
.tray-mic { height: 23px; }
.clock { width: 75px; text-align: right; font-size: 14.5px; line-height: 20px; }
.notif { margin-left: 9px; width: 20px; height: 20px; border-radius: 50%; background: #2ed12a; color: #10300f; font-size: 12px; line-height: 20px; text-align: center; }
```
